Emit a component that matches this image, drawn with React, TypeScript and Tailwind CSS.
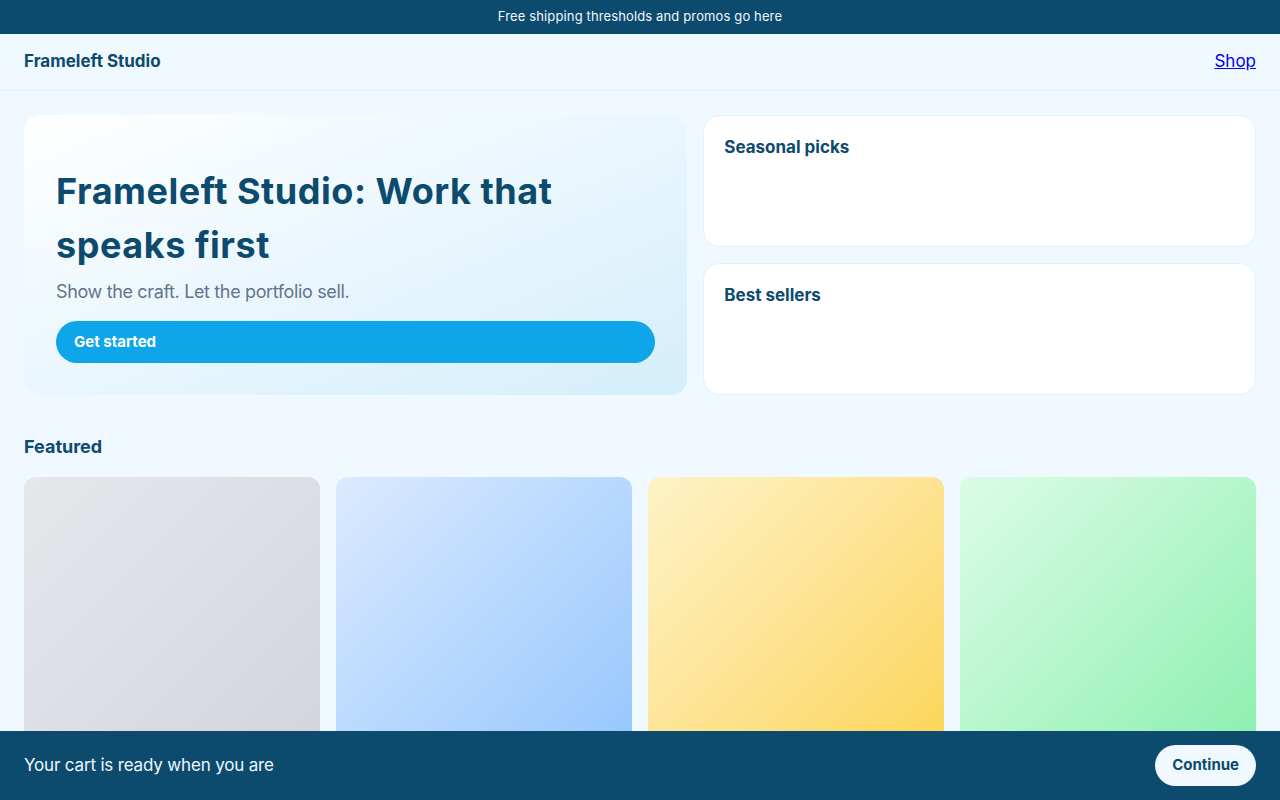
const font = { fontFamily: "Inter, 'Noto Sans', sans-serif" }

const featured = [
    "from-[#e5e7eb] to-[#d1d5db]",
    "from-[#dbeafe] to-[#93c5fd]",
    "from-[#fef3c7] to-[#fcd34d]",
    "from-[#dcfce7] to-[#86efac]",
]

const SideCard: React.FC<{ title: string }> = ({ title }) => (
    <div className="rounded-2xl border border-[#e0f2fe] bg-white p-5">
        <h2 className="text-[17px] font-bold leading-[22px] text-[#0c4a6e]">{title}</h2>
    </div>
)

export default function App() {
    return (
        <div className="min-h-screen bg-[#f0f9ff] pb-24 text-[#0c4a6e]" style={font}>
            <div className="flex h-[34px] items-center justify-center bg-[#0c4a6e] text-[13px] tracking-[0.01em] text-[#f0f9ff]">
                Free shipping thresholds and promos go here
            </div>
            <header className="flex h-[57px] items-center justify-between border-b border-[#e0f2fe] px-6">
                <a href="#" className="text-[17px] font-bold text-[#0c4a6e]">Frameleft Studio</a>
                <a href="#" className="text-[17px] text-[#0000ee] underline">Shop</a>
            </header>
            <main className="px-6 pt-6">
                <section className="grid grid-cols-[1.2fr_1fr] gap-4">
                    <div className="flex h-[280px] flex-col justify-end rounded-2xl bg-gradient-to-br from-white to-[#d4eefb] p-8">
                        <h1 className="text-4xl font-bold leading-[54px] tracking-[0.015em] text-[#0c4a6e]">
                            Frameleft Studio: Work that speaks first
                        </h1>
                        <p className="mt-1.5 text-lg tracking-[-0.02em] text-[#64748b]">Show the craft. Let the portfolio sell.</p>
                        <button className="mt-[15px] flex h-[42px] w-full items-center rounded-full bg-[#0ea5e9] px-[18px] text-[15px] font-bold text-white">
                            Get started
                        </button>
                    </div>
                    <div className="grid grid-rows-2 gap-4">
                        <SideCard title="Seasonal picks" />
                        <SideCard title="Best sellers" />
                    </div>
                </section>
                <section className="mt-[38px]">
                    <h2 className="text-lg font-bold leading-7 text-[#0c4a6e]">Featured</h2>
                    <div className="mt-4 grid grid-cols-4 gap-4">
                        {featured.map((g) => (
                            <div key={g} className={`aspect-square rounded-xl bg-gradient-to-br ${g}`} />
                        ))}
                    </div>
                </section>
            </main>
            <div className="fixed inset-x-0 bottom-0 flex h-[69px] items-center justify-between bg-[#0c4a6e] px-6">
                <span className="text-[17px] tracking-[-0.01em] text-[#f0f9ff]">Your cart is ready when you are</span>
                <button className="h-[41px] rounded-full bg-[#f0f9ff] px-[17px] text-[15px] font-bold text-[#0c4a6e]">
                    Continue
                </button>
            </div>
        </div>
    )
}
